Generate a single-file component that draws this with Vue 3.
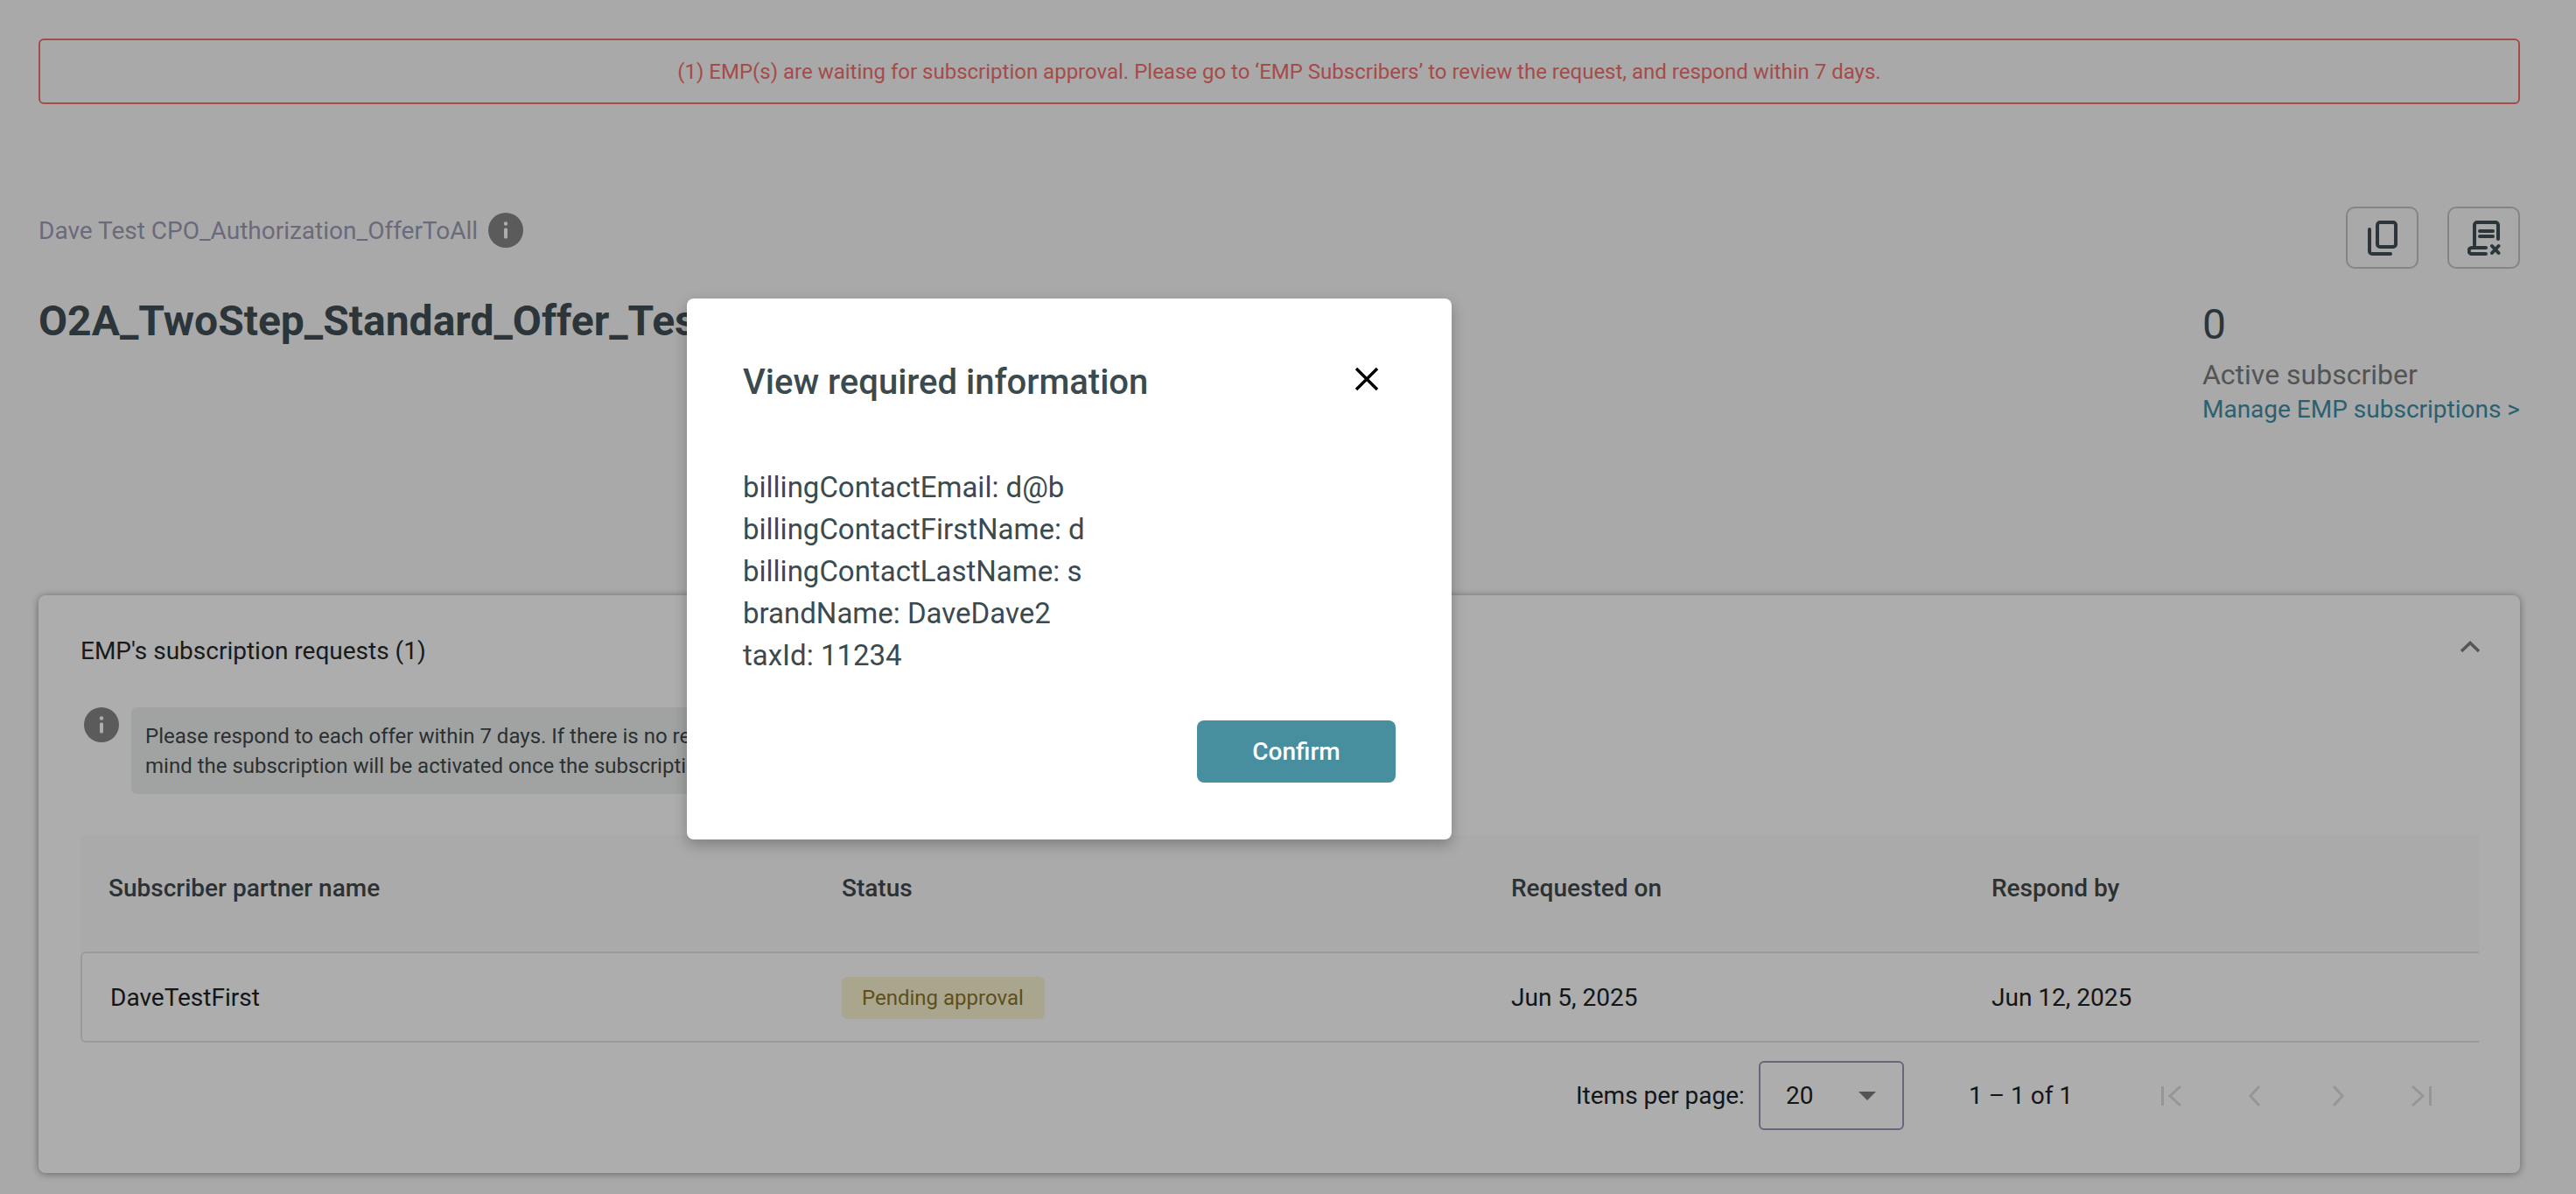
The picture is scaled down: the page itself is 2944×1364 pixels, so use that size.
<template>
  <div class="page">
    <div class="alert">
      (1) EMP(s) are waiting for subscription approval. Please go to ‘EMP Subscribers’ to review the request, and respond within 7 days.
    </div>

    <header class="offer-head">
      <div class="offer-left">
        <div class="crumb">
          <span>Dave Test CPO_Authorization_OfferToAll</span>
          <svg class="info" viewBox="0 0 40 40"><circle cx="20" cy="20" r="20" fill="#878787" /><circle cx="20" cy="12.5" r="2.2" fill="#fff" /><rect x="18" y="17.5" width="4" height="12" rx="1.5" fill="#fff" /></svg>
        </div>
        <h1 class="offer-title">O2A_TwoStep_Standard_Offer_Test</h1>
      </div>
      <div class="offer-right">
        <div class="actions">
          <button class="icon-btn" aria-label="Copy">
            <svg width="34" height="40" viewBox="0 0 34 40" fill="none" stroke="#415056" stroke-width="4" stroke-linecap="round" stroke-linejoin="round">
              <rect x="11" y="2" width="21" height="28" rx="3" />
              <path d="M2 10v25a3 3 0 0 0 3 3h21" />
            </svg>
          </button>
          <button class="icon-btn" aria-label="Cancel contract">
            <svg width="38" height="40" viewBox="0 0 38 40" fill="none" stroke="#415056" stroke-width="4" stroke-linecap="round" stroke-linejoin="round">
              <path d="M8 28V5a3 3 0 0 1 3-3h21a3 3 0 0 1 3 3v16" />
              <path d="M14 12h15M14 18h15" />
              <path d="M21 31H5a3 3 0 0 0 0 7h16" />
              <path d="M28 29l7.500 8M35.500 29l-7.500 8" />
            </svg>
          </button>
        </div>
        <div class="stats">
          <div class="stat-num">0</div>
          <div class="stat-label">Active subscriber</div>
          <a class="stat-link">Manage EMP subscriptions &gt;</a>
        </div>
      </div>
    </header>

    <section class="card">
      <div class="card-head">
        <span>EMP's subscription requests (1)</span>
        <svg width="24" height="14" viewBox="0 0 24 14" fill="none" stroke="#7f7f7f" stroke-width="3.500"><path d="M2 12L12 2.500 22 12" /></svg>
      </div>

      <div class="notice">
        <svg class="info" viewBox="0 0 40 40"><circle cx="20" cy="20" r="20" fill="#878787" /><circle cx="20" cy="12.5" r="2.2" fill="#fff" /><rect x="18" y="17.5" width="4" height="12" rx="1.500" fill="#fff" /></svg>
        <p class="notice-box">
          Please respond to each offer within 7 days. If there is no response, the request will expire automatically. Please keep in<br />
          mind the subscription will be activated once the subscription request has been approved by you.
        </p>
      </div>

      <div class="grid grid-head">
        <span v-for="col in columns" :key="col">{{ col }}</span>
      </div>
      <div class="grid grid-row">
        <span>DaveTestFirst</span>
        <span class="status-cell"><em class="badge">Pending approval</em></span>
        <span>Jun 5, 2025</span>
        <span>Jun 12, 2025</span>
      </div>

      <div class="pager">
        <span class="pager-label">Items per page:</span>
        <div class="pager-select">
          <span>20</span>
          <i class="caret"></i>
        </div>
        <span class="pager-range">1 – 1 of 1</span>
        <div class="pager-nav">
          <svg v-for="d in pagerIcons" :key="d" width="32" height="32" viewBox="0 0 32 32" fill="none" stroke="#dedede" stroke-width="3"><path :d="d" /></svg>
        </div>
      </div>
    </section>

    <div class="overlay"></div>

    <div class="dialog" role="dialog">
      <div class="dialog-head">
        <h2>View required information</h2>
        <svg width="28" height="28" viewBox="0 0 28 28" stroke="#000" stroke-width="3.400" fill="none"><path d="M2 2l24 24M26 2L2 26" /></svg>
      </div>
      <div class="dialog-body">
        <div v-for="item in fields" :key="item">{{ item }}</div>
      </div>
      <div class="dialog-foot">
        <button class="confirm">Confirm</button>
      </div>
    </div>
  </div>
</template>

<script setup>
const columns = ['Subscriber partner name', 'Status', 'Requested on', 'Respond by']

const fields = [
  'billingContactEmail: d@b',
  'billingContactFirstName: d',
  'billingContactLastName: s',
  'brandName: DaveDave2',
  'taxId: 11234'
]

const pagerIcons = [
  'M5.500 5v22M26 5L14 16l12 11',
  'M21 5L11 16l10 11',
  'M11 5l10 11-10 11',
  'M26.500 5v22M6 5l12 11L6 27'
]
</script>

<style>
html,
body {
  margin: 0;
  background: #f9f9f9;
}
</style>

<style scoped>
.page {
  position: relative;
  box-sizing: border-box;
  height: 1364px;
  padding: 44px 64px 0 44px;
  overflow: hidden;
  font-family: Roboto, "Liberation Sans", sans-serif;
  color: #1c2225;
}

.alert {
  height: 75px;
  box-sizing: border-box;
  display: flex;
  align-items: center;
  justify-content: center;
  border: 2px solid #f4706e;
  border-radius: 6px;
  color: #f4706e;
  font-size: 24px;
}

.offer-head {
  display: flex;
  justify-content: space-between;
  height: 561px;
  padding-top: 117px;
  box-sizing: border-box;
}

.crumb {
  display: flex;
  align-items: center;
  gap: 12px;
  height: 54px;
  font-size: 28px;
  color: #9d9db8;
}

.info {
  width: 40px;
  height: 40px;
  flex: none;
}

.offer-title {
  margin: 49px 0 0;
  font-size: 48px;
  line-height: 56px;
  font-weight: 700;
  color: #415056;
}

.offer-right {
  display: flex;
  flex-direction: column;
  align-items: flex-end;
}

.actions {
  display: flex;
  gap: 33px;
}

.icon-btn {
  width: 83px;
  height: 71px;
  display: flex;
  align-items: center;
  justify-content: center;
  padding: 0;
  background: none;
  border: 2px solid #c4c4c4;
  border-radius: 10px;
}

.stats {
  margin-top: 36px;
}

.stat-num {
  font-size: 48px;
  line-height: 56px;
  color: #415056;
}

.stat-label {
  font-size: 32px;
  line-height: 40px;
  margin-top: 9px;
  color: #7c7c7c;
}

.stat-link {
  display: block;
  font-size: 28px;
  line-height: 36px;
  margin-top: 2px;
  color: #3f8fa6;
}

.card {
  box-sizing: border-box;
  height: 660px;
  padding: 0 47px 0 48px;
  border-radius: 8px;
  background: #fff;
  box-shadow: 0 1px 8px rgba(0, 0, 0, 0.4);
}

.card-head {
  display: flex;
  align-items: center;
  justify-content: space-between;
  padding-top: 42px;
  height: 84px;
  box-sizing: border-box;
  font-size: 28px;
  color: #25292b;
}

.card-head svg {
  margin-right: -2px;
  margin-top: -8px;
}

.notice {
  display: flex;
  gap: 14px;
  margin: 44px 0 0 4px;
}

.notice-box {
  width: 1500px;
  margin: 0;
  padding: 16px;
  height: 99px;
  box-sizing: border-box;
  font-size: 24px;
  line-height: 34px;
  white-space: nowrap;
  overflow: hidden;
  border-radius: 6px;
  background: #eef1f1;
  color: #41484b;
}

.grid {
  display: grid;
  grid-template-columns: 838px 765px 549px 1fr;
  align-items: center;
  padding-left: 32px;
  font-size: 28px;
}

.grid-head {
  margin-top: 47px;
  height: 133px;
  padding-bottom: 12px;
  box-sizing: border-box;
  font-weight: 500;
  background: #fbfbfb;
  color: #414a4d;
}

.grid-row {
  height: 104px;
  box-sizing: border-box;
  padding-left: 30px;
  border: 2px solid #e4e4e4;
  border-right: none;
  border-radius: 6px 0 0 6px;
  color: #1c2225;
}

.grid-row span:first-child {
  padding-left: 2px;
}

.status-cell {
  display: flex;
  padding-top: 2px;
}

.badge {
  height: 48px;
  line-height: 48px;
  padding: 0 24px 0 23px;
  border-radius: 6px;
  font-size: 24px;
  font-style: normal;
  background: #f9f5d0;
  color: #8c742d;
}

.pager {
  display: flex;
  align-items: center;
  margin-top: 21px;
  padding-left: 1709px;
  font-size: 28px;
}

.pager-label {
  width: 209px;
}

.pager-select {
  width: 166px;
  height: 79px;
  box-sizing: border-box;
  display: flex;
  align-items: center;
  justify-content: space-between;
  padding: 0 30px 0 29px;
  border: 2px solid #9698b5;
  border-radius: 6px;
}

.caret {
  width: 0;
  height: 0;
  border-left: 10px solid transparent;
  border-right: 10px solid transparent;
  border-top: 10px solid #7c7c7c;
}

.pager-range {
  margin-left: 74px;
  width: 216px;
}

.pager-nav {
  display: flex;
  gap: 63px;
}

.overlay {
  position: absolute;
  inset: 0;
  background: rgba(0, 0, 0, 0.32);
}

.dialog {
  position: absolute;
  left: 785px;
  top: 341px;
  width: 874px;
  height: 618px;
  box-sizing: border-box;
  padding: 64px 64px 0;
  background: #fff;
  border-radius: 8px;
  box-shadow: 0 6px 16px rgba(0, 0, 0, 0.25);
  color: #3b4a4f;
}

.dialog-head {
  display: flex;
  align-items: flex-start;
  justify-content: space-between;
  padding-right: 19px;
}

.dialog-head svg {
  margin-top: 14px;
}

.dialog-head h2 {
  margin: 0;
  padding-top: 4px;
  font-size: 40px;
  line-height: 56px;
  font-weight: 500;
}

.dialog-body {
  margin-top: 68px;
  font-size: 33px;
  line-height: 48px;
}

.dialog-foot {
  display: flex;
  justify-content: flex-end;
  margin-top: 50px;
}

.confirm {
  width: 227px;
  height: 71px;
  border: none;
  border-radius: 8px;
  background: #478e9f;
  color: #fff;
  font: 500 28px Roboto, sans-serif;
}
</style>
